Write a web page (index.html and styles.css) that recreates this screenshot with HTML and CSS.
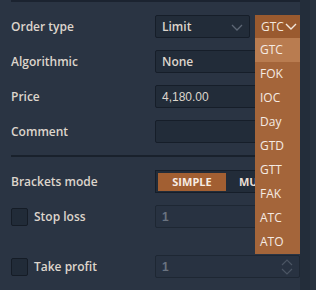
FILE: index.html
```html
<!DOCTYPE html>
<html lang="en">
<head>
    <meta charset="UTF-8">
    <title>Order ticket</title>
    <link rel="stylesheet" href="styles.css">
</head>
<body>
    <div class="panel">
        <div class="form">
            <div class="row">
                <span class="label">Order type</span>
                <div class="control split">
                    <div class="select small">Limit
                        <svg class="chev" width="12" height="7" viewBox="0 0 12 7"><path d="M1 1l5 5 5-5" fill="none" stroke="#5d6775" stroke-width="1.3"/></svg>
                    </div>
                    <div class="tif">
                        <div class="tif-btn">GTC<svg width="12" height="7" viewBox="0 0 12 7"><path d="M1 1l5 5 5-5" fill="none" stroke="#f3e7dd" stroke-width="1.4"/></svg></div>
                        <ul class="tif-list">
                            <li class="active">GTC</li>
                            <li>FOK</li>
                            <li>IOC</li>
                            <li>Day</li>
                            <li>GTD</li>
                            <li>GTT</li>
                            <li>FAK</li>
                            <li>ATC</li>
                            <li>ATO</li>
                        </ul>
                    </div>
                </div>
            </div>
            <div class="row">
                <span class="label">Algorithmic</span>
                <div class="control select">None</div>
            </div>
            <div class="row">
                <span class="label">Price</span>
                <div class="control field num">4,180.00</div>
            </div>
            <div class="row">
                <span class="label">Comment</span>
                <div class="control field"></div>
            </div>
            <hr class="sep">
            <div class="row">
                <span class="label">Brackets mode</span>
                <div class="control segmented">
                    <span class="seg on">SIMPLE</span>
                    <span class="seg">MU</span>
                </div>
            </div>
            <div class="row bracket">
                <label class="check"><span class="box"></span>Stop loss</label>
                <div class="control field num disabled">1</div>
            </div>
            <div class="row bracket last">
                <label class="check"><span class="box"></span>Take profit</label>
                <div class="control field num disabled">1
                    <svg class="spin" width="12" height="16" viewBox="0 0 12 16"><path d="M1 6l5-5 5 5M1 10l5 5 5-5" fill="none" stroke="#4b5563" stroke-width="1.2"/></svg>
                </div>
            </div>
        </div>
    </div>
    <div class="scroll"><div class="track"></div></div>
</body>
</html>
```

FILE: styles.css
```css
* {
    margin: 0;
    padding: 0;
    box-sizing: border-box;
}
body {
    font-family: 'Open Sans', sans-serif;
    background-color: #2a3443;
    color: #ddd5cc;
    width: 316px;
    height: 290px;
    overflow: hidden;
    display: flex;
}
.panel {
    width: 300px;
    padding-left: 11px;
}
.form {
    border-top: 2px solid #1b2330;
    padding-top: 13px;
}
.row {
    display: flex;
    align-items: center;
    height: 23px;
    margin-bottom: 12px;
}
.label {
    width: 144px;
    font-size: 12px;
    font-weight: 600;
    color: #ddd5cc;
}
.control {
    width: 145px;
    height: 23px;
}
.select,
.field {
    background-color: #222c39;
    border: 1px solid #161e29;
    border-radius: 2px;
    display: flex;
    align-items: center;
    padding-left: 6px;
    font-size: 12px;
    font-weight: 600;
    position: relative;
}
.split {
    display: flex;
    gap: 5px;
}
.select.small {
    width: 95px;
    height: 23px;
}
.chev {
    position: absolute;
    right: 6px;
    top: 8px;
}
.tif {
    position: relative;
    width: 45px;
}
.tif-btn {
    height: 23px;
    background-color: #9a5a2f;
    color: #f3e7dd;
    font-size: 12px;
    display: flex;
    align-items: center;
    padding-left: 6px;
    gap: 1px;
}
.tif-list {
    position: absolute;
    top: 23px;
    left: 0;
    width: 45px;
    list-style: none;
    background-color: #a4653a;
    z-index: 2;
}
.tif-list li {
    height: 24px;
    line-height: 24px;
    padding-left: 5px;
    font-size: 12px;
    color: #f5ebe3;
}
.tif-list li.active {
    background-color: #b97c50;
}
.num {
    font-family: 'Liberation Sans', sans-serif;
    font-weight: normal;
    font-size: 12px;
}
.disabled {
    color: #6a7380;
    font-weight: bold;
    background-color: #283241;
    border-color: #1e2733;
}
.spin {
    position: absolute;
    right: 6px;
    top: 3px;
}
.sep {
    border: none;
    border-top: 2px solid #19212c;
    margin: 1px 0 13px;
}
.segmented {
    background-color: #222c39;
    border: 1px solid #161e29;
    display: flex;
    align-items: center;
    padding: 0 2px;
    overflow: hidden;
}
.seg {
    font-size: 11px;
    font-weight: 700;
    color: #e9ddd3;
    height: 18px;
    line-height: 18px;
    width: 68px;
    text-align: center;
    flex-shrink: 0;
}
.seg:last-child {
    width: auto;
    padding-left: 13px;
}
.seg.on {
    background-color: #a25f32;
    color: #f7ece4;
}
.bracket {
    margin-bottom: 27px;
}
.check {
    width: 144px;
    display: flex;
    align-items: center;
    gap: 6px;
    font-size: 12px;
    font-weight: 600;
}
.box {
    width: 17px;
    height: 18px;
    background-color: #212b38;
    border: 1px solid #151c26;
    border-radius: 2px;
}
.scroll {
    width: 16px;
    background-color: #232d3a;
    display: flex;
    justify-content: flex-end;
}
.track {
    width: 6px;
    background-color: #29333f;
}
```
